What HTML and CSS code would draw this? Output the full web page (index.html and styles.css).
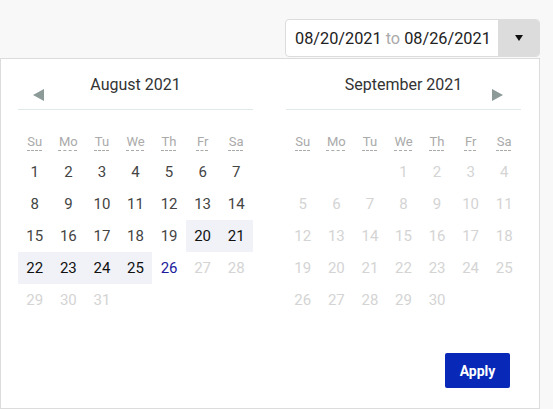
FILE: index.html
```html
<!DOCTYPE html>
<html>
<head>
<meta charset="utf-8">
<link rel="stylesheet" href="styles.css">
</head>
<body>
<div class="wrap">
  <div class="field-row">
    <div class="field">
      <div class="field-text"><span>08/20/2021 <span class="to">to</span> 08/26/2021</span></div>
      <div class="field-btn"><svg class="caret" width="8" height="6" viewBox="0 0 8 6"><polygon points="0,0 8,0 4,6" fill="#111"/></svg></div>
    </div>
  </div>
  <div class="panel">
    <div class="months">
      <div class="month">
        <div class="month-head">
          <span class="title">August 2021</span>
          <svg class="arrow prev" width="12" height="12" viewBox="0 0 12 12"><polygon points="12,0 12,12 1,6" fill="#8c9a98"/></svg>
        </div>
        <div class="grid">
          <div class="dn"><span>Su</span></div><div class="dn"><span>Mo</span></div><div class="dn"><span>Tu</span></div><div class="dn"><span>We</span></div><div class="dn"><span>Th</span></div><div class="dn"><span>Fr</span></div><div class="dn"><span>Sa</span></div>
          <div class="d">1</div><div class="d">2</div><div class="d">3</div><div class="d">4</div><div class="d">5</div><div class="d">6</div><div class="d">7</div>
          <div class="d">8</div><div class="d">9</div><div class="d">10</div><div class="d">11</div><div class="d">12</div><div class="d">13</div><div class="d">14</div>
          <div class="d">15</div><div class="d">16</div><div class="d">17</div><div class="d">18</div><div class="d">19</div><div class="d sel">20</div><div class="d sel">21</div>
          <div class="d sel">22</div><div class="d sel">23</div><div class="d sel">24</div><div class="d sel">25</div><div class="d today">26</div><div class="d off">27</div><div class="d off">28</div>
          <div class="d off">29</div><div class="d off">30</div><div class="d off">31</div>
        </div>
      </div>
      <div class="month">
        <div class="month-head">
          <span class="title">September 2021</span>
          <svg class="arrow next" width="12" height="12" viewBox="0 0 12 12"><polygon points="0,0 0,12 11,6" fill="#8c9a98"/></svg>
        </div>
        <div class="grid">
          <div class="dn"><span>Su</span></div><div class="dn"><span>Mo</span></div><div class="dn"><span>Tu</span></div><div class="dn"><span>We</span></div><div class="dn"><span>Th</span></div><div class="dn"><span>Fr</span></div><div class="dn"><span>Sa</span></div>
          <div class="d"></div><div class="d"></div><div class="d"></div><div class="d off">1</div><div class="d off">2</div><div class="d off">3</div><div class="d off">4</div>
          <div class="d off">5</div><div class="d off">6</div><div class="d off">7</div><div class="d off">8</div><div class="d off">9</div><div class="d off">10</div><div class="d off">11</div>
          <div class="d off">12</div><div class="d off">13</div><div class="d off">14</div><div class="d off">15</div><div class="d off">16</div><div class="d off">17</div><div class="d off">18</div>
          <div class="d off">19</div><div class="d off">20</div><div class="d off">21</div><div class="d off">22</div><div class="d off">23</div><div class="d off">24</div><div class="d off">25</div>
          <div class="d off">26</div><div class="d off">27</div><div class="d off">28</div><div class="d off">29</div><div class="d off">30</div>
        </div>
      </div>
    </div>
    <div class="actions">
      <button class="apply">Apply</button>
    </div>
  </div>
</div>
</body>
</html>
```
FILE: styles.css
```css
html, body {
  margin: 0;
  padding: 0;
  background: #f8f8f8;
  font-family: "Roboto", "Liberation Sans", sans-serif;
}
.wrap {
  width: 540px;
  padding-top: 19px;
}
.field-row {
  display: flex;
  justify-content: flex-end;
}
.field {
  display: flex;
  width: 255px;
  height: 38px;
  box-sizing: border-box;
  border: 1px solid #dcdcdc;
  border-radius: 4px;
  background: #fff;
  overflow: hidden;
}
.field-text {
  flex: 1;
  display: flex;
  align-items: center;
  padding-left: 9px;
  font-size: 16.3px;
  color: #222;
  white-space: nowrap;
}
.to { color: #aaa; }
.field-btn {
  width: 41px;
  background: #dcdcdc;
  display: flex;
  align-items: center;
  justify-content: center;
}
.caret { display: block; }
.panel {
  margin-top: 1px;
  background: #fff;
  border: 1px solid #dcdcdc;
  height: 351px;
  box-sizing: border-box;
  display: flex;
  flex-direction: column;
}
.months {
  display: flex;
  gap: 33px;
  padding: 16px 17px 0 17px;
}
.month {
  width: 235px;
}
.month-head {
  position: relative;
  height: 20px;
  padding-bottom: 14px;
  border-bottom: 1px solid #dfe9ea;
  text-align: center;
}
.title {
  font-size: 16px;
  line-height: 20px;
  color: #333;
}
.arrow {
  position: absolute;
  top: 14px;
  display: block;
}
.prev { left: 14px; }
.next { right: 17px; }
.grid {
  display: grid;
  grid-template-columns: repeat(7, 1fr);
  grid-template-rows: 30px;
  grid-auto-rows: 32px;
  margin-top: 16px;
}
.dn {
  display: flex;
  align-items: center;
  justify-content: center;
  padding-top: 1px;
  font-size: 13px;
  color: #aaa;
}
.dn span {
  text-decoration: underline dashed #aaa;
  text-underline-offset: 4px;
  text-decoration-thickness: 1px;
}
.d {
  display: flex;
  align-items: center;
  justify-content: center;
  font-size: 15px;
  color: #444;
}
.d.sel {
  background: #f0f2f8;
  color: #111;
}
.d.today { color: #1b1b9c; }
.d.off { color: #d4d4d4; }
.actions {
  margin-top: auto;
  display: flex;
  justify-content: flex-end;
  padding: 0 29px 20px 0;
}
.apply {
  width: 65px;
  height: 35px;
  border: none;
  border-radius: 2px;
  background: #0829b8;
  color: #fff;
  font-family: "Roboto", "Liberation Sans", sans-serif;
  font-weight: 700;
  font-size: 14px;
}
```
